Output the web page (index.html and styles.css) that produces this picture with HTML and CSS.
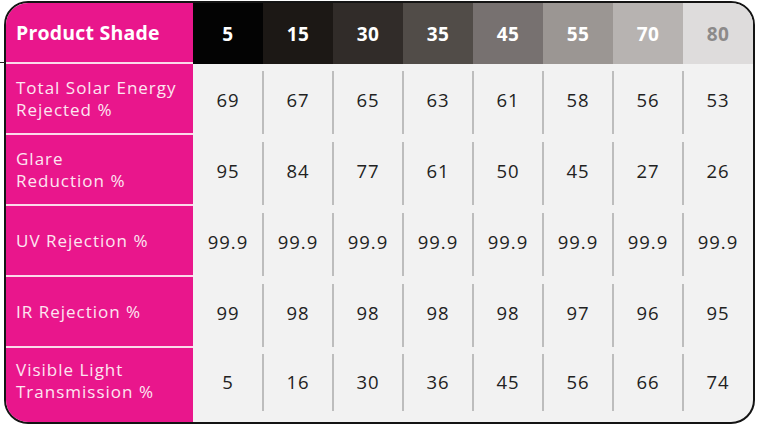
FILE: index.html
```html
<!DOCTYPE html>
<html>
<head>
<meta charset="utf-8">
<link rel="stylesheet" href="styles.css">
</head>
<body>
<div class="page">
  <div class="table">
    <div class="cell label head">Product Shade</div>
    <div class="cell shade s5">5</div>
    <div class="cell shade s15">15</div>
    <div class="cell shade s30">30</div>
    <div class="cell shade s35">35</div>
    <div class="cell shade s45">45</div>
    <div class="cell shade s55">55</div>
    <div class="cell shade s70">70</div>
    <div class="cell shade s80">80</div>

    <div class="cell label">Total Solar Energy<br>Rejected %</div>
    <div class="cell val first">69</div>
    <div class="cell val">67</div>
    <div class="cell val">65</div>
    <div class="cell val">63</div>
    <div class="cell val">61</div>
    <div class="cell val">58</div>
    <div class="cell val">56</div>
    <div class="cell val">53</div>

    <div class="cell label">Glare<br>Reduction %</div>
    <div class="cell val first">95</div>
    <div class="cell val">84</div>
    <div class="cell val">77</div>
    <div class="cell val">61</div>
    <div class="cell val">50</div>
    <div class="cell val">45</div>
    <div class="cell val">27</div>
    <div class="cell val">26</div>

    <div class="cell label">UV Rejection %</div>
    <div class="cell val first">99.9</div>
    <div class="cell val">99.9</div>
    <div class="cell val">99.9</div>
    <div class="cell val">99.9</div>
    <div class="cell val">99.9</div>
    <div class="cell val">99.9</div>
    <div class="cell val">99.9</div>
    <div class="cell val">99.9</div>

    <div class="cell label">IR Rejection %</div>
    <div class="cell val first">99</div>
    <div class="cell val">98</div>
    <div class="cell val">98</div>
    <div class="cell val">98</div>
    <div class="cell val">98</div>
    <div class="cell val">97</div>
    <div class="cell val">96</div>
    <div class="cell val">95</div>

    <div class="cell label last">Visible Light<br>Transmission %</div>
    <div class="cell val first lastrow">5</div>
    <div class="cell val lastrow">16</div>
    <div class="cell val lastrow">30</div>
    <div class="cell val lastrow">36</div>
    <div class="cell val lastrow">45</div>
    <div class="cell val lastrow">56</div>
    <div class="cell val lastrow">66</div>
    <div class="cell val lastrow">74</div>
  </div>
</div>
</body>
</html>
```
FILE: styles.css
```css
html, body {
  margin: 0;
  padding: 0;
  background: #ffffff;
}
body {
  width: 768px;
  height: 425px;
  overflow: hidden;
  position: relative;
  font-family: "Open Sans", "Liberation Sans", sans-serif;
}
.page {
  padding: 1px 0 0 4px;
}
.page::before {
  content: "";
  position: absolute;
  left: 0;
  top: 62px;
  width: 5px;
  height: 1px;
  background: #222;
}
.table {
  width: 747px;
  height: 419px;
  border: 2px solid #141414;
  border-radius: 24px;
  overflow: hidden;
  display: grid;
  grid-template-columns: 187px repeat(8, 1fr);
  grid-template-rows: 61px 71px 71px 71px 71px 1fr;
  background: #f2f2f2;
}
.cell {
  display: flex;
  align-items: center;
  box-sizing: border-box;
}
.label {
  background: #e9168c;
  color: #fde6f1;
  font-size: 17px;
  line-height: 22px;
  letter-spacing: 1px;
  padding-left: 10px;
  border-bottom: 2px solid #fbd9ea;
}
.label.last {
  border-bottom: none;
}
.label.head {
  color: #ffffff;
  font-weight: 700;
  font-size: 19.5px;
  letter-spacing: 0.2px;
}
.shade {
  justify-content: center;
  color: #ffffff;
  font-weight: 700;
  font-size: 19px;
  letter-spacing: 0.5px;
}
.s5 { background: #030303; }
.s15 { background: #1c1815; }
.s30 { background: #312c29; }
.s35 { background: #514c48; }
.s45 { background: #777170; }
.s55 { background: #9b9693; }
.s70 { background: #b7b3b1; }
.s80 { background: #dedcdc; color: #8c8a8a; }
.val {
  justify-content: center;
  color: #222222;
  font-size: 18.5px;
  letter-spacing: 1px;
  position: relative;
}
.val:not(.first)::before {
  content: "";
  position: absolute;
  left: -1px;
  top: 7px;
  bottom: 1px;
  width: 2px;
  background: #bdbdbd;
}
.val.lastrow::before {
  top: 6px;
  bottom: 11px;
}
.val.lastrow {
  padding-bottom: 8px;
}
.label.last {
  padding-bottom: 8px;
}
```
